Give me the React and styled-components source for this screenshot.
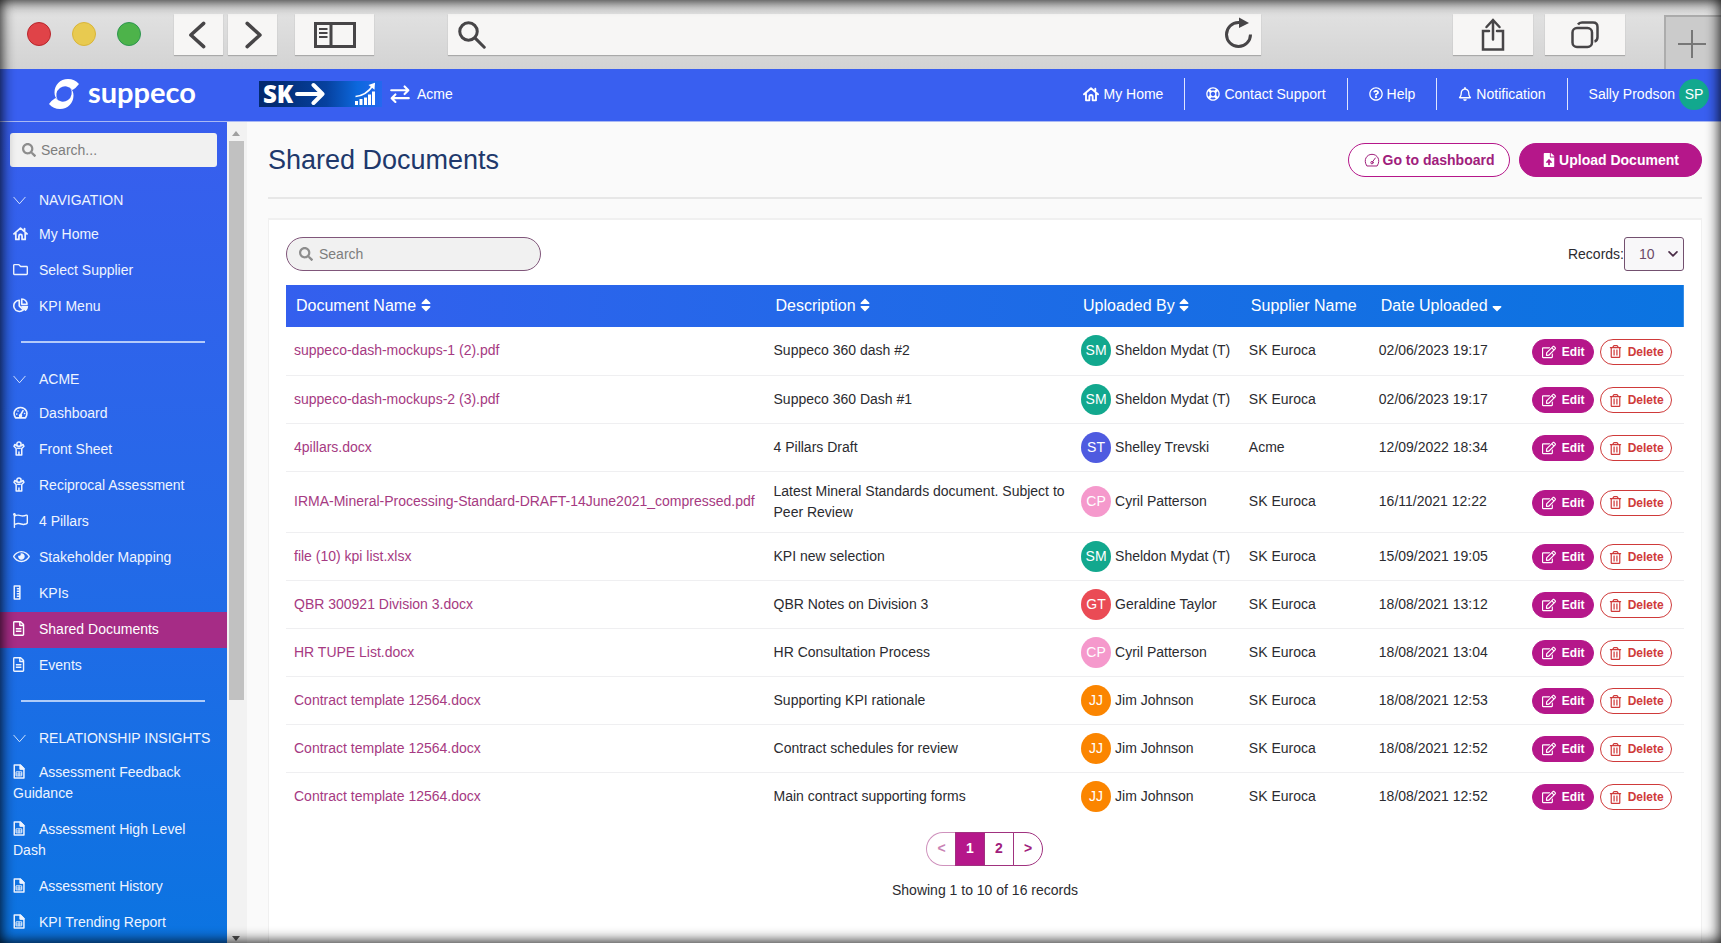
import React from 'react';
import styled, { createGlobalStyle, css } from 'styled-components';
import {
  FaSearch,
  FaSort,
  FaSortDown,
  FaRegEdit,
  FaRegTrashAlt,
  FaFileUpload,
  FaRegQuestionCircle,
  FaRegLifeRing,
  FaRegBell,
  FaRegFolder,
  FaRegFlag,
  FaRegEye,
  FaRegFileAlt,
} from 'react-icons/fa';

const colors = {
  blue: '#395ff0',
  blueEnd: '#0b74e1',
  pink: '#b5178a',
  link: '#a63a82',
  red: '#cf3a3a',
  text: '#2b2b30',
  title: '#20386b',
};

const GlobalStyle = createGlobalStyle`
  *, *::before, *::after {
    box-sizing: border-box;
  }
  body {
    margin: 0;
    background: #fafafa;
    color: ${colors.text};
    font-family: "Liberation Sans", Arial, sans-serif;
    font-size: 14px;
    line-height: 21px;
  }
  button, input, select {
    font: inherit;
    color: inherit;
    margin: 0;
  }
  a {
    color: inherit;
    text-decoration: none;
  }
  svg {
    flex: none;
  }
`;

const Page = styled.div`
  display: flex;
  flex-direction: column;
  height: 100vh;
  overflow: hidden;
`;

const Vignette = styled.div`
  position: fixed;
  inset: 0;
  pointer-events: none;
  box-shadow: inset 0 0 14px 1px rgba(0, 0, 0, 0.95);
`;

/* ---------- browser frame ---------- */

const Chrome = styled.div`
  display: flex;
  align-items: flex-start;
  flex: none;
  height: 69px;
  padding: 14px 0 0 27px;
  background: linear-gradient(#e4e4e4, #d3d3d3);
  color: #474547;
`;

const Lights = styled.div`
  display: flex;
  gap: 21px;
  padding-top: 8px;
  margin-right: 33px;
`;

const Light = styled.span`
  width: 24px;
  height: 24px;
  border-radius: 50%;
  border: 1px solid ${(p) => p.$edge};
  background: ${(p) => p.$fill};
`;

const ChromeButton = styled.button`
  display: flex;
  align-items: center;
  justify-content: center;
  width: ${(p) => p.$width}px;
  height: 41px;
  padding: 0;
  margin-right: ${(p) => p.$after || 0}px;
  border: 0;
  background: #f7f6f5;
  box-shadow: 0 1px 1px #a9a9a9;
`;

const AddressBar = styled.label`
  display: flex;
  align-items: center;
  flex: 1;
  height: 41px;
  margin-right: 192px;
  padding: 0 8px 0 10px;
  background: #f7f6f5;
  box-shadow: 0 1px 1px #a9a9a9;

  input {
    flex: 1;
    min-width: 0;
    border: 0;
    outline: 0;
    background: none;
  }
`;

const PlainButton = styled.button`
  display: flex;
  padding: 0 0 3px;
  border: 0;
  background: none;
`;

const NewTab = styled.button`
  display: flex;
  align-items: center;
  justify-content: center;
  width: 57px;
  height: 54px;
  margin-top: 1px;
  padding: 2px 4px 0 0;
  border: 1px solid #acacac;
  border-width: 2px 0 0 2px;
  background: #cbcbcb;
  color: #777;
`;

/* ---------- app header ---------- */

const Header = styled.header`
  display: flex;
  align-items: center;
  flex: none;
  height: 53px;
  padding: 0 12px 2px 49px;
  border-bottom: 1px solid #a9b8f4;
  background: ${colors.blue};
  color: #fff;
`;

const Brand = styled.a`
  display: flex;
  align-items: center;
  gap: 9px;
  width: 210px;
  font: 700 29px/32px Lato, sans-serif;

  span {
    padding-bottom: 5px;
  }
`;

const ClientLogo = styled.div`
  display: flex;
  align-items: center;
  justify-content: space-between;
  width: 123px;
  height: 26px;
  padding: 0 6px 0 4px;
  background: linear-gradient(90deg, #022a70 10%, #06419f 55%, #0c68dd 80%, #2568f0);
`;

const ClientMark = styled.span`
  display: flex;
  align-items: center;
  gap: 2px;
  font: 800 24px/26px 'Open Sans', sans-serif;
`;

const ClientName = styled.div`
  display: flex;
  align-items: center;
  flex: 1;
  gap: 7px;
  padding-left: 8px;
`;

const TopNav = styled.nav`
  display: flex;
  align-items: center;

  > a {
    display: flex;
    align-items: center;
    gap: 4px;
    height: 32px;
    padding: 0 21px;
    border-left: 1px solid #dfe5ff;
  }
  > a:first-child {
    border-left: 0;
  }
  > a:last-child {
    padding-right: 0;
  }
`;

const Avatar = styled.span`
  display: inline-flex;
  align-items: center;
  justify-content: center;
  flex: none;
  width: 30px;
  height: 31px;
  border-radius: 50%;
  background: ${(p) => p.$color};
  color: #fff;
`;

/* ---------- sidebar ---------- */

const Body = styled.div`
  display: flex;
  flex: 1;
  min-height: 0;
`;

const Sidebar = styled.aside`
  flex: none;
  width: 227px;
  overflow: hidden;
  padding-top: 11px;
  background: linear-gradient(#385eee, #2569e8 50%, ${colors.blueEnd});
  color: #eef4ff;
`;

const SideSearch = styled.label`
  display: flex;
  align-items: center;
  gap: 5px;
  height: 34px;
  margin: 0 10px 17px;
  padding: 0 12px;
  border-radius: 3px;
  background: #f1f1f1;
  color: #8d8d8d;

  input {
    flex: 1;
    min-width: 0;
    padding: 0;
    border: 0;
    outline: 0;
    background: none;
  }
  input::placeholder {
    color: #7d7d7d;
  }
`;

const Section = styled.section`
  & + &::before {
    content: '';
    display: block;
    height: 2px;
    margin: 16px 22px 20px 21px;
    background: rgba(225, 236, 255, 0.75);
  }
`;

const SectionHead = styled.button`
  display: flex;
  align-items: center;
  gap: 13px;
  width: 100%;
  height: 33px;
  padding: 0 13px;
  border: 0;
  background: none;
  white-space: nowrap;
`;

const SideItem = styled.a`
  display: block;
  padding: 7px 30px 8px 13px;
  ${(p) =>
    p.$active &&
    css`
      background: #a62c86;
      color: #fff;
    `}

  svg {
    width: 26px;
    height: 15px;
    vertical-align: -2px;
  }
`;

const Scrollbar = styled.div`
  display: flex;
  flex-direction: column;
  align-items: center;
  flex: none;
  width: 20px;
  padding: 5px 4px 2px 2px;
  background: #f2f2f2;
`;

const Track = styled.div`
  flex: 1;
  width: 100%;
  margin: 5px 0 4px;
`;

const Thumb = styled.div`
  width: 15px;
  height: 71%;
  background: #c1c1c1;
`;

const Arrow = styled.span`
  border: 4px solid transparent;
  ${(p) => (p.$down ? 'border-top: 5px solid #505050; border-bottom: 0;' : 'border-bottom: 5px solid #a0a0a0; border-top: 0;')}
  margin: 4px 0 0;
`;

/* ---------- content ---------- */

const Main = styled.main`
  display: flex;
  flex-direction: column;
  flex: 1;
  min-width: 0;
  padding: 20px 19px 0 21px;
  background: #fafafa;
`;

const TitleRow = styled.div`
  display: flex;
  align-items: center;
  gap: 9px;
  height: 57px;
  padding-bottom: 19px;
  margin-bottom: 19px;
  border-bottom: 2px solid #e7e7e7;

  h1 {
    flex: 1;
    margin: 0;
    font-size: 27px;
    font-weight: 400;
    line-height: 34px;
    color: ${colors.title};
  }
`;

const PillButton = styled.button`
  display: flex;
  align-items: center;
  justify-content: center;
  gap: 3px;
  flex: none;
  width: ${(p) => p.$width}px;
  height: 34px;
  padding: 0;
  border: 1px solid ${colors.pink};
  border-radius: 17px;
  background: ${(p) => (p.$filled ? colors.pink : '#fff')};
  color: ${(p) => (p.$filled ? '#fff' : '#a0207c')};
  font-weight: 700;
`;

const Card = styled.section`
  flex: 1;
  padding: 17px 17px 0;
  border: 1px solid #f0f0f0;
  border-top-width: 2px;
  border-bottom: 0;
  background: #fff;
`;

const Tools = styled.div`
  display: flex;
  align-items: center;
  justify-content: space-between;
  margin-bottom: 14px;
`;

const TableSearch = styled(SideSearch)`
  gap: 6px;
  width: 255px;
  margin: 0;
  border: 1px solid #80567a;
  border-radius: 17px;
`;

const Records = styled.label`
  display: flex;
  align-items: center;
`;

const SelectBox = styled.span`
  display: grid;
  align-items: center;

  select,
  svg {
    grid-area: 1 / 1;
  }
  select {
    width: 60px;
    height: 34px;
    padding: 0 0 0 14px;
    border: 1px solid #73506f;
    border-radius: 3px;
    appearance: none;
    background: #f8f7f9;
    color: #6c4a69;
  }
  svg {
    justify-self: end;
    margin-right: 6px;
    pointer-events: none;
    color: #4a2c47;
  }
`;

const Table = styled.table`
  width: 100%;
  border-collapse: collapse;
  table-layout: fixed;

  thead tr {
    background: linear-gradient(90deg, #345fee, #2468e9 35%, #146fe3 75%, ${colors.blueEnd});
  }
  th {
    height: 42px;
    padding: 0 0 2px 10px;
    color: #fff;
    font-size: 16px;
    font-weight: 400;
    text-align: left;
    white-space: nowrap;
  }
  th svg {
    width: 10px;
    vertical-align: -2px;
  }
  td {
    height: 48px;
    padding: 9px 8px;
    border-bottom: 1px solid #efeff1;
  }
  tbody tr:last-child td {
    border-bottom: 0;
  }
  td:first-child a {
    color: ${colors.link};
    white-space: nowrap;
  }
`;

const Person = styled.div`
  display: flex;
  align-items: center;
  gap: 4px;
  height: 28px;
  white-space: nowrap;
`;

const Actions = styled.div`
  display: flex;
  gap: 6px;
  padding: 2px 0 0 1px;
`;

const RowButton = styled.button`
  display: flex;
  align-items: center;
  justify-content: center;
  gap: 6px;
  width: ${(p) => (p.$danger ? 72 : 62)}px;
  height: 26px;
  padding: 0;
  border: 1px solid ${(p) => (p.$danger ? colors.red : colors.pink)};
  border-radius: 13px;
  background: ${(p) => (p.$danger ? '#fff' : colors.pink)};
  color: ${(p) => (p.$danger ? colors.red : '#fff')};
  font-size: 12px;
  font-weight: 700;
  line-height: 16px;
`;

const Pager = styled.nav`
  display: flex;
  justify-content: center;
  margin: 12px 0 14px;
`;

const PageButton = styled.button`
  width: 30px;
  height: 34px;
  padding: 0 0 2px;
  margin-left: -1px;
  border: 1px solid #a0327f;
  background: ${(p) => (p.$current ? colors.pink : '#fff')};
  color: ${(p) => (p.$current ? '#fff' : '#a0207c')};
  font-weight: 700;

  &:first-child {
    border-radius: 17px 0 0 17px;
  }
  &:last-child {
    border-radius: 0 17px 17px 0;
  }
  &:disabled {
    border-color: #cf92bd;
    border-right: 0;
    color: #c983b4;
  }
`;

const Summary = styled.p`
  margin: 0;
  text-align: center;
`;

/* ---------- icons ---------- */

function Icon({ size = 16, width = 2, box = 24, children }) {
  return (
    <svg
      width={size}
      height={size}
      viewBox={`0 0 ${box} ${box}`}
      fill="none"
      stroke="currentColor"
      strokeWidth={width}
      strokeLinejoin="round"
      strokeLinecap="round"
      preserveAspectRatio="xMinYMid meet"
      aria-hidden="true"
    >
      {children}
    </svg>
  );
}

const HomeIcon = (props) => (
  <Icon width={2.8} {...props}>
    <path d="M1.500 12.500 12 3.500l10.500 9M18.500 4v5M4.500 11v10.500h5V16a2.500 2.500 0 0 1 5 0v5.500h5V11" />
  </Icon>
);

const PieIcon = () => (
  <Icon width={2.6}>
    <path d="M10 3.500a9 9 0 1 0 6.500 15.500L10 12.500zM14 1.500v8.500h8.500A8.500 8.500 0 0 0 14 1.500z" />
    <path d="M14.500 13.500H23a9 9 0 0 1-3 6z" fill="currentColor" />
  </Icon>
);

const GaugeIcon = () => (
  <Icon width={2.6}>
    <path d="M4 20.500C-1.500 12 4 4 12 4s13.500 8 8 16.500zM12 16l4-7" />
    <circle cx="12" cy="17" r="1.500" />
    <path d="M6 14.500h.1M8 9.500h.1M18.500 13.500h.1" />
  </Icon>
);

const ThinGaugeIcon = () => (
  <Icon size={16} width={1.5}>
    <path d="M4 20.500C-1.500 12 4 3.500 12 3.500s13.500 8.500 8 17zM13 14.500l4-5.500" />
    <circle cx="12" cy="16" r="1.800" />
  </Icon>
);

const PersonIcon = () => (
  <Icon width={2.4}>
    <circle cx="9.500" cy="5" r="3.400" />
    <path d="M5.500 7.500 3 5.500 1.500 8.500 5 12v10.500h9V12l3.500-3.500L16 5.500l-2.500 2M9.500 17.500v5M7.500 11.500h4" />
  </Icon>
);

const RulerIcon = () => (
  <Icon width={2.4}>
    <path d="M2 1.500h9v21H2zM7 6h3.500M7 10h3.500M7 14h3.500M7 18h3.500" />
  </Icon>
);

const SheetIcon = () => (
  <Icon width={2.4}>
    <path d="M2 1.500h9.500l6 6v15H2zM11.500 2v6h6" />
    <path d="M12 2v5.500h5.500z" fill="currentColor" />
    <path d="M5.500 12.500h8.500v6.500H5.500zM5.500 16h8.500M9.700 13v6" strokeWidth="1.500" />
  </Icon>
);

const ChevronIcon = () => (
  <Icon size={13} width={1.6}>
    <path d="m1.500 6 10.500 12L22.500 6" />
  </Icon>
);

const SwapIcon = () => (
  <Icon size={20} width={2.6}>
    <path d="M1.500 7.500h20M17.500 3l4.500 4.500-4.500 4.500M22.500 17h-20M6.500 12.500 2 17l4.500 4.500" />
  </Icon>
);

const BrandMark = () => (
  <svg width="30" height="30" viewBox="0 0 30 30" fill="#fff" aria-hidden="true">
    <path d="M30 5C27 1.500 23.500 0 19 0 11 0 5.500 6 5.500 13.500c0 3 1 5.500 3.500 8A7.800 7.800 0 0 1 23.500 11Q27 9 30 5z" />
    <path d="M0 25c3 3.500 6.500 5 11 5 8 0 13.500-6 13.500-13.500 0-3-1-5.500-3.500-8A7.800 7.800 0 0 1 6.500 19Q3 21 0 25z" />
  </svg>
);

const LogoArrow = () => (
  <svg width="30" height="24" viewBox="0 0 30 24" fill="none" stroke="#fff" strokeWidth="4" strokeLinecap="round" strokeLinejoin="round" aria-hidden="true">
    <path d="M2 12h25M18.500 3l9 9-9 9" />
  </svg>
);

const LogoChart = () => (
  <svg width="22" height="24" viewBox="0 0 22 24" fill="#fff" aria-hidden="true">
    <path d="M1 19h3v4H1zM5.500 17h3v6h-3zM10 15.500h3V23h-3zM14 12.500h3V23h-3zM18 9.500h3V23h-3z" />
    <path d="M1.500 14.500C8 14 14.500 10 19 3.500" fill="none" stroke="#fff" strokeWidth="1.600" />
    <path d="M14.500 3 21 .8l-.5 7z" />
  </svg>
);

/* ---------- data ---------- */

const sections = [
  {
    title: 'NAVIGATION',
    items: [
      ['My Home', HomeIcon],
      ['Select Supplier', FaRegFolder],
      ['KPI Menu', PieIcon],
    ],
  },
  {
    title: 'ACME',
    items: [
      ['Dashboard', GaugeIcon],
      ['Front Sheet', PersonIcon],
      ['Reciprocal Assessment', PersonIcon],
      ['4 Pillars', FaRegFlag],
      ['Stakeholder Mapping', FaRegEye],
      ['KPIs', RulerIcon],
      ['Shared Documents', FaRegFileAlt],
      ['Events', FaRegFileAlt],
    ],
  },
  {
    title: 'RELATIONSHIP INSIGHTS',
    items: [
      ['Assessment Feedback Guidance', SheetIcon],
      ['Assessment High Level Dash', SheetIcon],
      ['Assessment History', SheetIcon],
      ['KPI Trending Report', SheetIcon],
    ],
  },
];

const people = {
  SM: ['Sheldon Mydat (T)', '#12a88e'],
  ST: ['Shelley Trevski', '#4f5be0'],
  CP: ['Cyril Patterson', '#f599cc'],
  GT: ['Geraldine Taylor', '#ea4b55'],
  JJ: ['Jim Johnson', '#fb8500'],
};

const documents = [
  ['suppeco-dash-mockups-1 (2).pdf', 'Suppeco 360 dash #2', 'SM', 'SK Euroca', '02/06/2023 19:17'],
  ['suppeco-dash-mockups-2 (3).pdf', 'Suppeco 360 Dash #1', 'SM', 'SK Euroca', '02/06/2023 19:17'],
  ['4pillars.docx', '4 Pillars Draft', 'ST', 'Acme', '12/09/2022 18:34'],
  [
    'IRMA-Mineral-Processing-Standard-DRAFT-14June2021_compressed.pdf',
    'Latest Mineral Standards document. Subject to Peer Review',
    'CP',
    'SK Euroca',
    '16/11/2021 12:22',
  ],
  ['file (10) kpi list.xlsx', 'KPI new selection', 'SM', 'SK Euroca', '15/09/2021 19:05'],
  ['QBR 300921 Division 3.docx', 'QBR Notes on Division 3', 'GT', 'SK Euroca', '18/08/2021 13:12'],
  ['HR TUPE List.docx', 'HR Consultation Process', 'CP', 'SK Euroca', '18/08/2021 13:04'],
  ['Contract template 12564.docx', 'Supporting KPI rationale', 'JJ', 'SK Euroca', '18/08/2021 12:53'],
  ['Contract template 12564.docx', 'Contract schedules for review', 'JJ', 'SK Euroca', '18/08/2021 12:52'],
  ['Contract template 12564.docx', 'Main contract supporting forms', 'JJ', 'SK Euroca', '18/08/2021 12:52'],
];

const Col = styled.col`
  width: ${(p) => p.$share}%;
`;

/* ---------- parts ---------- */

function BrowserBar() {
  return (
    <Chrome>
      <Lights>
        <Light $fill="#e04348" $edge="#b8262c" />
        <Light $fill="#e8ca50" $edge="#d9b53a" />
        <Light $fill="#4db34a" $edge="#2d9650" />
      </Lights>
      <ChromeButton $width={49} $after={5} aria-label="Back">
        <Icon size={28} width={3}>
          <path d="M16 2 5 12l11 10" />
        </Icon>
      </ChromeButton>
      <ChromeButton $width={49} $after={18} aria-label="Forward">
        <Icon size={28} width={3}>
          <path d="m7 2 11 10L7 22" />
        </Icon>
      </ChromeButton>
      <ChromeButton $width={79} $after={74} aria-label="Toggle sidebar">
        <svg width="42" height="26" viewBox="0 0 42 26" fill="none" stroke="currentColor" strokeWidth="3">
          <path d="M1.500 1.500h39v23h-39zM17 1.500v23" />
          <path d="M5 7h8.500M5 11h8.500M5 15h8.500" strokeWidth="2" />
        </svg>
      </ChromeButton>
      <AddressBar>
        <Icon size={28} width={2.6}>
          <circle cx="9" cy="9" r="7.500" />
          <path d="M14.500 14.500 22.500 22.500" />
        </Icon>
        <input type="text" aria-label="Address" />
        <PlainButton aria-label="Reload">
          <svg width="28" height="32" viewBox="0 0 28 32" fill="none" stroke="#474547" strokeWidth="3">
            <path d="M25.500 17.500a12 12 0 1 1-12-12h2" />
            <path d="M14 .5v10.500l10-5z" fill="#474547" stroke="none" />
          </svg>
        </PlainButton>
      </AddressBar>
      <ChromeButton $width={80} $after={12} aria-label="Share">
        <svg width="24" height="34" viewBox="0 0 24 34" fill="none" stroke="currentColor" strokeWidth="2.500" strokeLinecap="round">
          <path d="M8 13H2v18.500h20V13h-6M12 21.500V2.500M5.500 9 12 2l6.500 7" />
        </svg>
      </ChromeButton>
      <ChromeButton $width={80} $after={39} aria-label="Show tabs">
        <svg width="28" height="28" viewBox="0 0 28 28" fill="none" stroke="currentColor" strokeWidth="2.500">
          <rect x="1.500" y="7" width="19.500" height="19" rx="4.500" />
          <path d="M7 3.500C8 2 9 1.500 11 1.500h11c3 0 4.500 1.500 4.500 4.500v10c0 2.500-.8 4-3 4.500" />
        </svg>
      </ChromeButton>
      <NewTab aria-label="New tab">
        <svg width="28" height="28" viewBox="0 0 28 28" fill="none" stroke="currentColor" strokeWidth="2">
          <path d="M14 0v28M0 14h28" />
        </svg>
      </NewTab>
    </Chrome>
  );
}

function AppHeader() {
  return (
    <Header>
      <Brand href="#">
        <BrandMark />
        <span>suppeco</span>
      </Brand>
      <ClientLogo>
        <ClientMark>
          SK
          <LogoArrow />
        </ClientMark>
        <LogoChart />
      </ClientLogo>
      <ClientName>
        <SwapIcon />
        Acme
      </ClientName>
      <TopNav>
        <a href="#">
          <HomeIcon size={16} />
          My Home
        </a>
        <a href="#">
          <FaRegLifeRing />
          Contact Support
        </a>
        <a href="#">
          <FaRegQuestionCircle />
          Help
        </a>
        <a href="#">
          <FaRegBell />
          Notification
        </a>
        <a href="#">
          Sally Prodson
          <Avatar $color="#12a88e">SP</Avatar>
        </a>
      </TopNav>
    </Header>
  );
}

function SideMenu() {
  return (
    <Sidebar>
      <SideSearch>
        <FaSearch />
        <input type="search" placeholder="Search..." aria-label="Search menu" />
      </SideSearch>
      {sections.map((section) => (
        <Section key={section.title}>
          <SectionHead>
            <ChevronIcon />
            {section.title}
          </SectionHead>
          {section.items.map(([label, ItemIcon]) => (
            <SideItem key={label} href="#" $active={label === 'Shared Documents'}>
              <ItemIcon preserveAspectRatio="xMinYMid meet" />
              {label}
            </SideItem>
          ))}
        </Section>
      ))}
    </Sidebar>
  );
}

function DocumentTable() {
  return (
    <Table>
      <colgroup>
        <Col $share={34.3} />
        <Col $share={22} />
        <Col $share={12} />
        <Col $share={9.3} />
        <Col $share={10.9} />
        <Col $share={11.5} />
      </colgroup>
      <thead>
        <tr>
          <th>
            Document Name <FaSort />
          </th>
          <th>
            Description <FaSort />
          </th>
          <th>
            Uploaded By <FaSort />
          </th>
          <th>Supplier Name</th>
          <th>
            Date Uploaded <FaSortDown />
          </th>
          <th aria-label="Actions" />
        </tr>
      </thead>
      <tbody>
        {documents.map(([name, description, initials, supplier, date], i) => (
          <tr key={i}>
            <td>
              <a href="#">{name}</a>
            </td>
            <td>{description}</td>
            <td>
              <Person>
                <Avatar $color={people[initials][1]}>{initials}</Avatar>
                {people[initials][0]}
              </Person>
            </td>
            <td>{supplier}</td>
            <td>{date}</td>
            <td>
              <Actions>
                <RowButton>
                  <FaRegEdit size={14} />
                  Edit
                </RowButton>
                <RowButton $danger>
                  <FaRegTrashAlt size={13} />
                  Delete
                </RowButton>
              </Actions>
            </td>
          </tr>
        ))}
      </tbody>
    </Table>
  );
}

export default function App() {
  return (
    <Page>
      <GlobalStyle />
      <BrowserBar />
      <AppHeader />
      <Body>
        <SideMenu />
        <Scrollbar>
          <Arrow />
          <Track>
            <Thumb />
          </Track>
          <Arrow $down />
        </Scrollbar>
        <Main>
          <TitleRow>
            <h1>Shared Documents</h1>
            <PillButton $width={162}>
              <ThinGaugeIcon />
              Go to dashboard
            </PillButton>
            <PillButton $width={183} $filled>
              <FaFileUpload />
              Upload Document
            </PillButton>
          </TitleRow>
          <Card>
            <Tools>
              <TableSearch>
                <FaSearch />
                <input type="search" placeholder="Search" aria-label="Search documents" />
              </TableSearch>
              <Records>
                Records:
                <SelectBox>
                  <select defaultValue="10">
                    <option>10</option>
                    <option>25</option>
                    <option>50</option>
                  </select>
                  <Icon size={10} width={4}>
                    <path d="m2.500 7 9.500 9.500L21.500 7" />
                  </Icon>
                </SelectBox>
              </Records>
            </Tools>
            <DocumentTable />
            <Pager aria-label="Pages">
              <PageButton disabled>&lt;</PageButton>
              <PageButton $current>1</PageButton>
              <PageButton>2</PageButton>
              <PageButton>&gt;</PageButton>
            </Pager>
            <Summary>Showing 1 to 10 of 16 records</Summary>
          </Card>
        </Main>
      </Body>
      <Vignette />
    </Page>
  );
}
